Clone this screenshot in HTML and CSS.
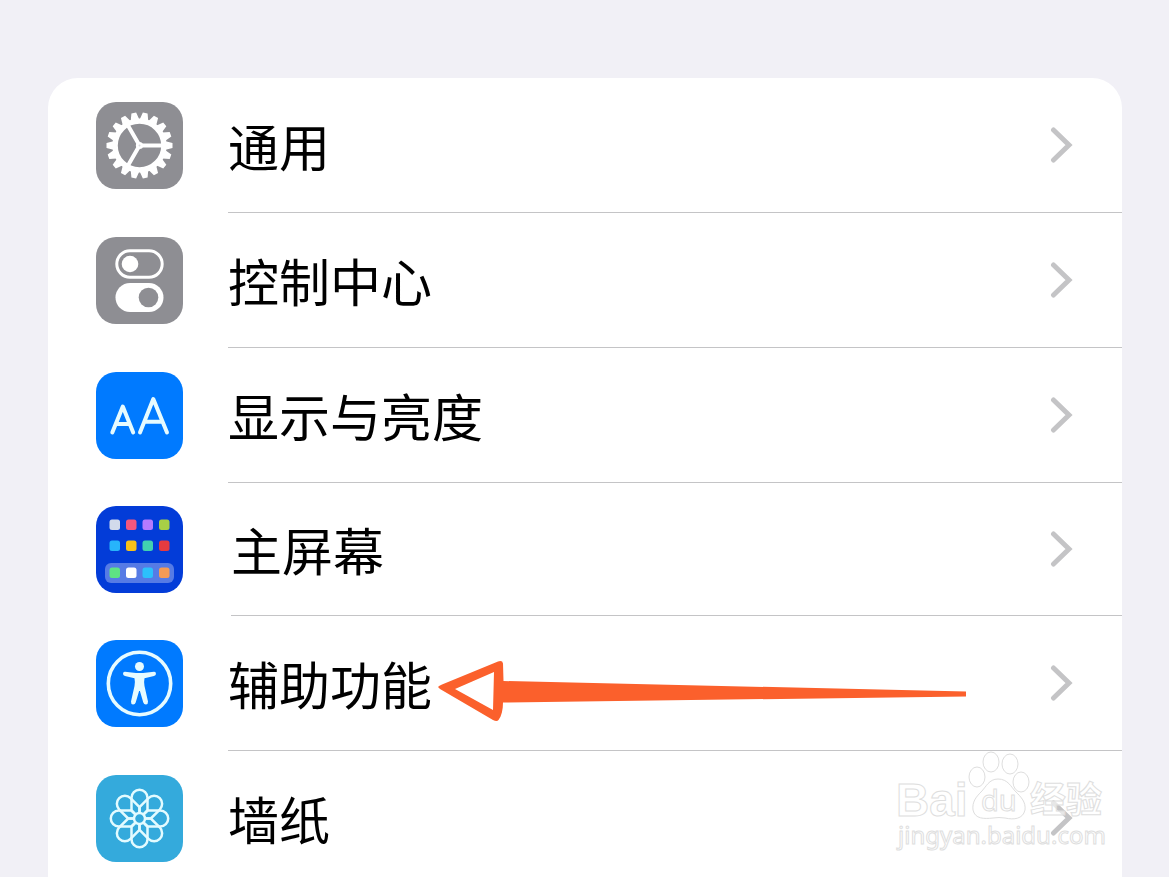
FILE: index.html
```html
<!DOCTYPE html>
<html lang="zh-CN">
<head>
<meta charset="utf-8">
<meta name="viewport" content="width=device-width, initial-scale=1">
<title>设置</title>
<link rel="stylesheet" href="styles.css">
</head>
<body>
<main class="page">
  <nav class="card" aria-label="设置">
    <a class="row" href="#general">
      <svg class="icon icon-gray" viewBox="0 0 87 87" aria-hidden="true">
        <defs>
          <path id="teeth" d="M-4.300-26L-2.400-33H2.400L4.300-26ZM-4.300 26L-2.400 33H2.400L4.300 26Z"/>
        </defs>
        <g transform="translate(43.500 43.500)" fill="#fff">
          <use href="#teeth" transform="rotate(10)"/>
          <use href="#teeth" transform="rotate(30)"/>
          <use href="#teeth" transform="rotate(50)"/>
          <use href="#teeth" transform="rotate(70)"/>
          <use href="#teeth" transform="rotate(90)"/>
          <use href="#teeth" transform="rotate(110)"/>
          <use href="#teeth" transform="rotate(130)"/>
          <use href="#teeth" transform="rotate(150)"/>
          <use href="#teeth" transform="rotate(170)"/>
          <circle r="24.400" fill="none" stroke="#fff" stroke-width="5.400"/>
          <path d="M0 0H23M0 0L-11.500-19.900M0 0L-11.500 19.900" stroke="#fff" stroke-width="4"/>
          <circle r="3.600"/>
          <circle r="1" fill="#dcdcdf"/>
        </g>
      </svg>
      <span class="line"><span class="label">通用</span>
        <svg class="chevron" viewBox="0 0 24 38" aria-hidden="true"><path d="M3.500 4L19 19L3.500 34"/></svg></span>
    </a>
    <a class="row" href="#control-center">
      <svg class="icon icon-gray" viewBox="0 0 87 87" aria-hidden="true">
        <rect x="20.800" y="13.800" width="45.400" height="26.400" rx="13.200" fill="none" stroke="#fff" stroke-width="3"/>
        <circle cx="34" cy="27" r="8.300" fill="#fff"/>
        <rect x="19.500" y="46" width="48" height="29" rx="14.500" fill="#fff"/>
        <circle cx="52.500" cy="60.500" r="9.800" fill="#8e8e93"/>
      </svg>
      <span class="line"><span class="label">控制中心</span>
        <svg class="chevron" viewBox="0 0 24 38" aria-hidden="true"><path d="M3.500 4L19 19L3.500 34"/></svg></span>
    </a>
    <a class="row" href="#display">
      <svg class="icon icon-blue" viewBox="0 0 87 87" aria-hidden="true">
        <g fill="none" stroke="#e6fbff" stroke-width="4" stroke-linecap="round" stroke-linejoin="round">
          <path d="M16.300 60.500L26.800 34.500L37.200 60.500M20 52H33.600"/>
          <path d="M44 60.500L57.300 27L71 60.500M48.500 49.800H66.500"/>
        </g>
      </svg>
      <span class="line"><span class="label">显示与亮度</span>
        <svg class="chevron" viewBox="0 0 24 38" aria-hidden="true"><path d="M3.500 4L19 19L3.500 34"/></svg></span>
    </a>
    <a class="row row-short" href="#home-screen">
      <svg class="icon icon-navy" viewBox="0 0 87 87" aria-hidden="true">
        <rect x="9" y="57" width="69" height="20" rx="6" fill="#567be5"/>
        <rect x="13.500" y="13.500" width="10.500" height="10.500" rx="2.500" fill="#d2daeb"/>
        <rect x="30" y="13.500" width="10.500" height="10.500" rx="2.500" fill="#f4577f"/>
        <rect x="46.500" y="13.500" width="10.500" height="10.500" rx="2.500" fill="#b57aff"/>
        <rect x="63" y="13.500" width="10.500" height="10.500" rx="2.500" fill="#a8cf46"/>
        <rect x="13.500" y="34.500" width="10.500" height="10.500" rx="2.500" fill="#27b4fb"/>
        <rect x="30" y="34.500" width="10.500" height="10.500" rx="2.500" fill="#f8c119"/>
        <rect x="46.500" y="34.500" width="10.500" height="10.500" rx="2.500" fill="#41d2b0"/>
        <rect x="63" y="34.500" width="10.500" height="10.500" rx="2.500" fill="#e63b3f"/>
        <rect x="13.500" y="61.500" width="10.500" height="10.500" rx="2.500" fill="#5ee384"/>
        <rect x="30" y="61.500" width="10.500" height="10.500" rx="2.500" fill="#fff"/>
        <rect x="46.500" y="61.500" width="10.500" height="10.500" rx="2.500" fill="#2cc0fc"/>
        <rect x="63" y="61.500" width="10.500" height="10.500" rx="2.500" fill="#f59b55"/>
      </svg>
      <span class="line"><span class="label">主屏幕</span>
        <svg class="chevron" viewBox="0 0 24 38" aria-hidden="true"><path d="M3.500 4L19 19L3.500 34"/></svg></span>
    </a>
    <a class="row" href="#accessibility">
      <svg class="icon icon-blue" viewBox="0 0 87 87" aria-hidden="true">
        <circle cx="43.500" cy="43.500" r="31.200" fill="none" stroke="#e6fbff" stroke-width="3.600"/>
        <circle cx="43.500" cy="26.500" r="4.500" fill="#e6fbff"/>
        <path d="M29 31.700Q27 31.500 27 34Q27.300 35.600 29 36L38.500 38.200Q39.200 41 38.500 46L35 61.500Q34.800 64.200 37 64.500Q39 64.600 39.700 62.500L43.100 51H43.900L47.300 62.500Q48 64.600 50 64.500Q52.200 64.200 52 61.500L48.500 46Q47.800 41 48.500 38.200L58 36Q59.700 35.600 60 34Q60 31.500 58 31.700L47 33H40Z" fill="#e6fbff"/>
      </svg>
      <span class="line"><span class="label">辅助功能</span>
        <svg class="chevron" viewBox="0 0 24 38" aria-hidden="true"><path d="M3.500 4L19 19L3.500 34"/></svg></span>
      <svg class="arrow" viewBox="0 0 532 64" aria-hidden="true">
        <path fill="#fb602c" fill-rule="evenodd" d="M2 28Q3 26.500 6 25.500L62 2.500Q66.500 1 67 4.500L67.500 22L530 32.500V37.500L67 43.500C67 51 65.500 57 62.500 61Q61 63 57 61L4 30ZM19 30L57 51L58 13Z"/>
      </svg>
    </a>
    <a class="row" href="#wallpaper">
      <svg class="icon icon-cyan" viewBox="0 0 87 87" aria-hidden="true">
        <defs>
          <path id="petal" d="M-3.300-3.300L-8-8V-20.700A8 8 0 0 1 8-20.700V-8L3.300-3.300"/>
        </defs>
        <g transform="translate(43.500 43.500)" fill="none" stroke="#e3fbff" stroke-width="2.500" stroke-linejoin="round">
          <use href="#petal"/>
          <use href="#petal" transform="rotate(45)"/>
          <use href="#petal" transform="rotate(90)"/>
          <use href="#petal" transform="rotate(135)"/>
          <use href="#petal" transform="rotate(180)"/>
          <use href="#petal" transform="rotate(225)"/>
          <use href="#petal" transform="rotate(270)"/>
          <use href="#petal" transform="rotate(315)"/>
          <circle r="5.500"/>
        </g>
      </svg>
      <span class="line"><span class="label">墙纸</span>
        <svg class="chevron" viewBox="0 0 24 38" aria-hidden="true"><path d="M3.500 4L19 19L3.500 34"/></svg></span>
      <svg class="watermark" viewBox="0 0 220 104" role="img" aria-label="Baidu 经验 jingyan.baidu.com">
        <g class="mark">
          <text class="brand" x="6" y="65">Bai</text>
          <ellipse cx="87" cy="26" rx="8" ry="10"/>
          <ellipse cx="101" cy="11" rx="8" ry="10"/>
          <ellipse cx="120" cy="13" rx="8" ry="10"/>
          <ellipse cx="131" cy="31" rx="8" ry="10"/>
          <path d="M108 28C99 28 96 36 91 41C86 46 82 51 83 59C85 68 94 68 103 67Q109 66 115 67C124 69 133 68 135 59C136 51 131 46 126 41C121 36 118 28 108 28Z"/>
          <text class="du" x="91" y="60">du</text>
          <text class="han" x="140" y="62">经验</text>
          <text class="url" x="8" y="93">jingyan.baidu.com</text>
        </g>
      </svg>
    </a>
  </nav>
</main>
</body>
</html>
```

FILE: styles.css
```css
* { box-sizing: border-box; }

body {
  margin: 0;
  height: 100vh;
  overflow: hidden;
  background: #f1f0f6;
  color: #000;
  font-family: "Noto Sans CJK SC", "Liberation Sans", sans-serif;
}

.page { padding: 78px 47px 0 48px; }

.card {
  background: #fff;
  border-radius: 30px 30px 0 0;
}

.row {
  position: relative;
  display: flex;
  gap: 45px;
  height: 135px;
  padding-left: 48px;
  color: inherit;
  text-decoration: none;
}

.row-short {
  gap: 48px;
  height: 133px;
}

.icon {
  flex: none;
  width: 87px;
  height: 87px;
  margin-top: 24px;
  border-radius: 20px;
}

.row-short .icon { margin-top: 23px; }

.icon-gray { background: #8e8e93; }
.icon-blue { background: #007aff; }
.icon-navy { background: #033cd8; }
.icon-cyan { background: #34aadc; }

.line {
  flex: 1;
  display: flex;
  align-items: center;
  justify-content: space-between;
  padding-right: 48px;
  border-bottom: 1px solid #c4c4c6;
}

.row:last-child .line { border-bottom-color: transparent; }

.label {
  font-size: 51px;
  line-height: 72px;
}

.chevron {
  width: 24px;
  height: 38px;
  fill: none;
  stroke: #c4c4c6;
  stroke-width: 5px;
  stroke-linecap: round;
  stroke-linejoin: miter;
}

.arrow {
  position: absolute;
  top: 43px;
  left: 388px;
  width: 532px;
  height: 64px;
}

.watermark {
  position: absolute;
  top: 0;
  right: 12px;
  width: 220px;
  height: 104px;
  overflow: visible;
}

.mark {
  fill: #fff;
  fill-opacity: 0.6;
  stroke: #dedede;
  stroke-width: 1px;
  font-family: "Liberation Sans", sans-serif;
}

.brand { font-size: 46px; font-weight: 700; }
.du { font-family: "Noto Sans", sans-serif; font-size: 29px; }
.han { font-family: "Noto Sans CJK SC", sans-serif; font-size: 36px; font-weight: 700; }
.url { font-family: "Noto Sans", sans-serif; font-size: 24px; }
```
